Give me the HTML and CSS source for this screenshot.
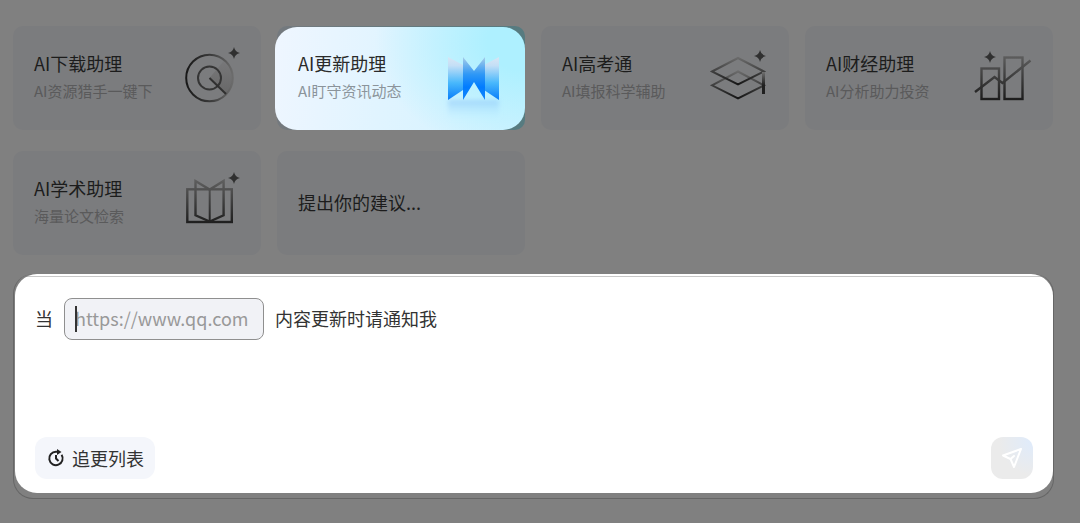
FILE: index.html
```html
<!DOCTYPE html>
<html lang="zh-CN">
<head>
    <meta charset="utf-8">
    <title>AI助理</title>
    <link rel="stylesheet" href="styles.css">
</head>
<body>
    <svg class="defs" aria-hidden="true">
        <defs>
            <linearGradient id="ink" x1="0" y1="8" x2="0" y2="54" gradientUnits="userSpaceOnUse">
                <stop offset="0" stop-color="#606060"/>
                <stop offset="1" stop-color="#1c1c1c"/>
            </linearGradient>
            <linearGradient id="ring" x1="0" y1="0" x2="1" y2="0">
                <stop offset="0" stop-color="#181818"/>
                <stop offset="0.5" stop-color="#383838"/>
                <stop offset="1" stop-color="#6c6c6c"/>
            </linearGradient>
            <linearGradient id="sweep" x1="0" y1="1" x2="0" y2="0">
                <stop offset="0" stop-color="#686868"/>
                <stop offset="1" stop-color="#78787a"/>
            </linearGradient>
            <linearGradient id="layer" x1="0" y1="0" x2="0" y2="1">
                <stop offset="0" stop-color="#6a6a6a"/>
                <stop offset="1" stop-color="#161616"/>
            </linearGradient>
            <linearGradient id="tassel" x1="0" y1="0" x2="0" y2="1">
                <stop offset="0" stop-color="#707070"/>
                <stop offset="0.6" stop-color="#202020"/>
            </linearGradient>
            <linearGradient id="wing" x1="0" y1="0" x2="0" y2="1">
                <stop offset="0" stop-color="#d8e6f4"/>
                <stop offset="0.2" stop-color="#c4dff6"/>
                <stop offset="0.6" stop-color="#48b8fc"/>
                <stop offset="1" stop-color="#087cfa"/>
            </linearGradient>
            <linearGradient id="wing-mid" x1="0" y1="0" x2="0" y2="1">
                <stop offset="0" stop-color="#a8cce8"/>
                <stop offset="0.4" stop-color="#2f98f6"/>
                <stop offset="0.7" stop-color="#007cff"/>
                <stop offset="1" stop-color="#1484fa"/>
            </linearGradient>
            <linearGradient id="wing-shade" x1="0" y1="0" x2="0" y2="1">
                <stop offset="0" stop-color="#8cc4fa" stop-opacity="0.6"/>
                <stop offset="1" stop-color="#b8ecfc" stop-opacity="0"/>
            </linearGradient>
            <filter id="soft" x="-20%" y="-20%" width="140%" height="140%">
                <feGaussianBlur stdDeviation="2"/>
            </filter>
            <path id="spark" d="M0-6Q1-1 6 0Q1 1 0 6Q-1 1-6 0Q-1-1 0-6Z" fill="#303030" stroke="none"/>
        </defs>
    </svg>

    <main>
        <div class="cards">
            <button class="card" type="button">
                <span class="text">
                    <span class="title">AI下载助理</span>
                    <span class="desc">AI资源猎手一键下</span>
                </span>
                <svg class="icon" viewBox="0 0 64 64" fill="none" stroke-width="2">
                    <path d="M28.5 32L43.5 14A23.3 23.3 0 0 1 45 48.5Z" fill="url(#sweep)"/>
                    <circle cx="28.5" cy="32" r="23.3" stroke="url(#ring)"/>
                    <circle cx="28.5" cy="32" r="11.5" stroke="#353535"/>
                    <path d="M28.5 32L45 48" stroke="#303030"/>
                    <use href="#spark" x="53" y="7"/>
                </svg>
            </button>

            <button class="card active" type="button">
                <span class="text">
                    <span class="title">AI更新助理</span>
                    <span class="desc">AI盯守资讯动态</span>
                </span>
                <svg class="icon" viewBox="0 0 64 64">
                    <path d="M3 54H54V74H3Z" fill="url(#wing-shade)" filter="url(#soft)"/>
                    <path d="M3 11L18 19V44L3 54Z" fill="url(#wing)"/>
                    <path d="M54 11L39 19V44L54 54Z" fill="url(#wing)"/>
                    <path d="M18 11L29 25L40 11V54L29 36L18 54Z" fill="url(#wing-mid)"/>
                </svg>
            </button>

            <button class="card" type="button">
                <span class="text">
                    <span class="title">AI高考通</span>
                    <span class="desc">AI填报科学辅助</span>
                </span>
                <svg class="icon" viewBox="0 0 64 64" fill="none" stroke="url(#layer)" stroke-width="2">
                    <path d="M3 39.3L29 25.5L55 39.3L29 52.3Z"/>
                    <path d="M3 25.5L29 12L55 25.5L29 38.5Z"/>
                    <path d="M53 26H56V48H53Z" fill="url(#tassel)" stroke="none"/>
                    <use href="#spark" x="51" y="10"/>
                </svg>
            </button>

            <button class="card" type="button">
                <span class="text">
                    <span class="title">AI财经助理</span>
                    <span class="desc">AI分析助力投资</span>
                </span>
                <svg class="icon" viewBox="0 0 64 64" fill="none" stroke="url(#ink)" stroke-width="2.4">
                    <rect x="8.5" y="22.5" width="17.5" height="30.5"/>
                    <rect x="31.5" y="11.5" width="18" height="41.5"/>
                    <path d="M2 46L21.5 31L29.5 37L57.5 14.5"/>
                    <use href="#spark" x="17" y="11"/>
                </svg>
            </button>

            <button class="card" type="button">
                <span class="text">
                    <span class="title">AI学术助理</span>
                    <span class="desc">海量论文检索</span>
                </span>
                <svg class="icon" viewBox="0 0 64 64" fill="none" stroke="url(#ink)" stroke-width="2.4">
                    <rect x="6.3" y="18.3" width="44.5" height="32.7"/>
                    <path d="M14.5 10L28.7 18.5L42.6 10V44.3L28.7 50.5L14.5 44.3Z"/>
                    <path d="M27.7 18.5H29.7V50H27.7Z" fill="url(#ink)" stroke="none"/>
                    <use href="#spark" x="53" y="7"/>
                </svg>
            </button>

            <button class="card" type="button">
                <span class="title">提出你的建议...</span>
            </button>
        </div>

        <div class="composer">
            <form class="panel">
                <div class="prompt">
                    <label for="url">当</label>
                    <span class="field">
                        <input id="url" type="text" placeholder="https://www.qq.com">
                        <span class="caret"></span>
                    </span>
                    <span>内容更新时请通知我</span>
                </div>
                <div class="actions">
                    <button class="list" type="button">
                        <svg viewBox="0 0 18 18" fill="none" stroke="#222" stroke-width="2">
                            <path d="M11 2.7H9A6.7 6.7 0 1 0 14.6 5.8"/>
                            <path d="M10 0L14.5 3L10 6Z" fill="#222" stroke="none"/>
                            <path d="M9 6V9.5L11.5 12"/>
                        </svg>
                        追更列表
                    </button>
                    <button class="send" type="submit" aria-label="发送">
                        <svg viewBox="0 0 24 24" fill="none" stroke="#fff" stroke-width="2" stroke-linejoin="round" stroke-linecap="round">
                            <path d="M21 3L3 9.5L10.5 13L14 21Z"/>
                            <path d="M10.5 13L14 10"/>
                        </svg>
                    </button>
                </div>
            </form>
        </div>
    </main>
</body>
</html>
```
FILE: styles.css
```css
* { box-sizing: border-box; }
body { margin: 0; background: #808080; color: #333; font-family: "Noto Sans CJK SC", sans-serif; font-size: 18px; line-height: 28px; }
button, input { font: inherit; color: inherit; border: 0; margin: 0; }
button { cursor: pointer; }
main { padding: 26px 27px 24px 13px; }
.defs { position: absolute; width: 0; height: 0; }

.cards { display: grid; grid-template-columns: repeat(4, 1fr); gap: 21px 16px; }
.card { position: relative; display: flex; align-items: center; justify-content: space-between; height: 104px; padding: 0 16px 2px 21px; border-radius: 10px; background: #7b7c7e; color: #1c1c1c; text-align: left; }
.text { display: flex; flex-direction: column; }
.title, .desc { position: relative; white-space: nowrap; }
.desc { color: #5a5a5b; font-size: 15px; }
.icon { position: relative; flex: none; width: 64px; height: 64px; margin-top: 2px; overflow: visible; }

/* selected card is lifted above the dimmed one */
.card.active { background: linear-gradient(90deg, #74797e, #567b80); color: #2a2a2a; }
.card.active::before { content: ""; position: absolute; inset: 1px 0 0 -2px; border-radius: 22px; background: radial-gradient(ellipse 60% 110% at 100% 15%, #aef0ff 25%, rgba(174, 240, 255, 0) 100%), linear-gradient(100deg, #eff6ff, #e0f4ff 45%, #d0f2ff); }
.card.active .desc { color: #8b949b; }

.composer { margin: 19px -1px 0 0; padding: 0 0 5px 1px; border: 1px solid #666; border-top: 0; border-radius: 20px; }
.panel { display: flex; flex-direction: column; justify-content: space-between; min-height: 219px; padding: 24px 20px 14px; border-radius: 22px; background: linear-gradient(#fff 2px, #c8c8c8 2px, #c8c8c8 3px, #fff 3px); }
.prompt { display: flex; align-items: center; gap: 11px; }
.field { position: relative; display: flex; width: 200px; }
.field input { width: 100%; height: 42px; padding: 0 10px 2px; border: 1px solid #8f8f8f; border-radius: 8px; background: #f1f2f6; outline: 0; }
.field input::placeholder { color: #999; opacity: 1; }
.prompt label, .prompt > span:last-child { padding-bottom: 2px; }
.caret { position: absolute; left: 11px; top: 8px; width: 2px; height: 26px; background: #333; }

.actions { display: flex; align-items: center; justify-content: space-between; }
.list { display: flex; align-items: center; gap: 7px; height: 42px; padding: 0 11px 0 12px; border-radius: 12px; background: #f4f6fb; }
.list svg { width: 18px; height: 18px; }
.send { display: flex; align-items: center; justify-content: center; width: 42px; height: 42px; padding: 0; border-radius: 12px; background: radial-gradient(circle at 100% 10%, #dfebfb, #ebebeb 60%); }
.send svg { width: 24px; height: 24px; }
```
